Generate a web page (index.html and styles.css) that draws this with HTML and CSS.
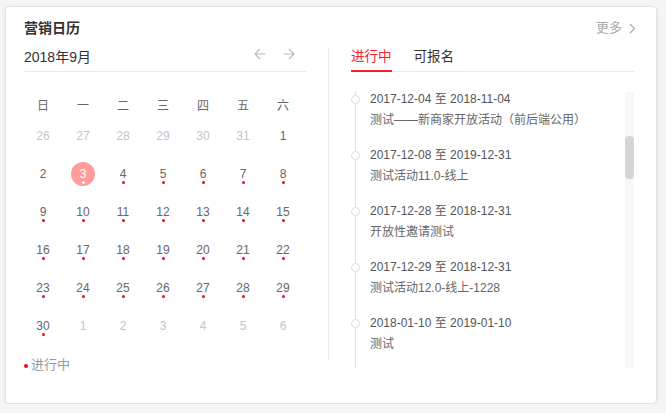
FILE: index.html
```html
<!DOCTYPE html>
<html lang="zh-CN">
<head>
<meta charset="utf-8">
<title>营销日历</title>
<link rel="stylesheet" href="styles.css">
</head>
<body>
<div class="card">
  <div class="card-head">
    <span class="card-title">营销日历</span>
    <span class="more">更多<svg class="chev" width="7" height="11" viewBox="0 0 7 11"><path d="M1 1l4.5 4.5L1 10" fill="none" stroke="#aaa" stroke-width="1.2"/></svg></span>
  </div>
  <div class="card-body">
    <div class="cal">
      <div class="cal-head">
        <span class="month">2018年9月</span>
        <div class="nav">
          <svg width="12" height="12" viewBox="0 0 12 12"><path d="M11.5 6H1M6 1L1 6l5 5" fill="none" stroke="#b6bbc4" stroke-width="1.2"/></svg>
          <svg width="12" height="12" viewBox="0 0 12 12"><path d="M0.5 6H11M6 1l5 5-5 5" fill="none" stroke="#b6bbc4" stroke-width="1.2"/></svg>
        </div>
      </div>
      <div class="grid">
        <div class="wd">日</div><div class="wd">一</div><div class="wd">二</div><div class="wd">三</div><div class="wd">四</div><div class="wd">五</div><div class="wd">六</div>
        <div class="day other"><span class="num">26</span></div>
        <div class="day other"><span class="num">27</span></div>
        <div class="day other"><span class="num">28</span></div>
        <div class="day other"><span class="num">29</span></div>
        <div class="day other"><span class="num">30</span></div>
        <div class="day other"><span class="num">31</span></div>
        <div class="day"><span class="num">1</span></div>
        <div class="day"><span class="num">2</span></div>
        <div class="day today has"><span class="num">3</span></div>
        <div class="day has"><span class="num">4</span></div>
        <div class="day has"><span class="num">5</span></div>
        <div class="day has"><span class="num">6</span></div>
        <div class="day has"><span class="num">7</span></div>
        <div class="day has"><span class="num">8</span></div>
        <div class="day has"><span class="num">9</span></div>
        <div class="day has"><span class="num">10</span></div>
        <div class="day has"><span class="num">11</span></div>
        <div class="day has"><span class="num">12</span></div>
        <div class="day has"><span class="num">13</span></div>
        <div class="day has"><span class="num">14</span></div>
        <div class="day has"><span class="num">15</span></div>
        <div class="day has"><span class="num">16</span></div>
        <div class="day has"><span class="num">17</span></div>
        <div class="day has"><span class="num">18</span></div>
        <div class="day has"><span class="num">19</span></div>
        <div class="day has"><span class="num">20</span></div>
        <div class="day has"><span class="num">21</span></div>
        <div class="day has"><span class="num">22</span></div>
        <div class="day has"><span class="num">23</span></div>
        <div class="day has"><span class="num">24</span></div>
        <div class="day has"><span class="num">25</span></div>
        <div class="day has"><span class="num">26</span></div>
        <div class="day has"><span class="num">27</span></div>
        <div class="day has"><span class="num">28</span></div>
        <div class="day has"><span class="num">29</span></div>
        <div class="day has"><span class="num">30</span></div>
        <div class="day other"><span class="num">1</span></div>
        <div class="day other"><span class="num">2</span></div>
        <div class="day other"><span class="num">3</span></div>
        <div class="day other"><span class="num">4</span></div>
        <div class="day other"><span class="num">5</span></div>
        <div class="day other"><span class="num">6</span></div>
      </div>
      <div class="legend"><i class="ldot"></i>进行中</div>
    </div>
    <div class="divider"></div>
    <div class="events">
      <div class="tabs">
        <span class="tab active">进行中</span>
        <span class="tab">可报名</span>
      </div>
      <div class="list-wrap">
        <div class="timeline">
          <div class="items">
            <div class="item"><i class="tdot"></i><div class="date">2017-12-04 至 2018-11-04</div><div class="name">测试——新商家开放活动（前后端公用）</div></div>
            <div class="item"><i class="tdot"></i><div class="date">2017-12-08 至 2019-12-31</div><div class="name">测试活动11.0-线上</div></div>
            <div class="item"><i class="tdot"></i><div class="date">2017-12-28 至 2018-12-31</div><div class="name">开放性邀请测试</div></div>
            <div class="item"><i class="tdot"></i><div class="date">2017-12-29 至 2018-12-31</div><div class="name">测试活动12.0-线上-1228</div></div>
            <div class="item"><i class="tdot"></i><div class="date">2018-01-10 至 2019-01-10</div><div class="name">测试</div></div>
          </div>
        </div>
        <div class="track"><div class="thumb"></div></div>
      </div>
    </div>
  </div>
</div>
</body>
</html>
```
FILE: styles.css
```css
* { box-sizing: border-box; }
html, body { margin: 0; }
body {
  background: #f5f5f5;
  padding: 6px 0 0 5px;
  font-family: "Liberation Sans", "Noto Sans CJK SC", sans-serif;
  color: #333;
}
.card {
  width: 652px;
  height: 398px;
  background: #fff;
  border: 1px solid #e2e2e2;
  border-radius: 4px;
  box-shadow: 0 1px 4px rgba(0,0,0,0.08);
  padding: 11px 22px 0 18px;
}
.card-head {
  display: flex;
  justify-content: space-between;
  align-items: center;
  height: 20px;
}
.card-title {
  font-size: 14px;
  font-weight: bold;
  color: #333;
  line-height: 20px;
}
.more {
  display: flex;
  align-items: center;
  gap: 7px;
  font-size: 13px;
  color: #aaa;
  line-height: 20px;
  margin-right: -2px;
}
.card-body {
  display: flex;
  align-items: flex-start;
}
.cal {
  width: 282px;
  flex: none;
}
.cal-head {
  display: flex;
  justify-content: space-between;
  align-items: flex-start;
  margin-top: 9px;
  padding-bottom: 4px;
  border-bottom: 1px solid #e8eaee;
}
.month {
  font-size: 14px;
  line-height: 20px;
  color: #333;
}
.nav {
  display: flex;
  gap: 17px;
  padding-top: 1px;
  padding-right: 11px;
}
.grid {
  display: grid;
  grid-template-columns: repeat(7, 40px);
  grid-auto-rows: 38px;
  grid-template-rows: 32px;
  margin-top: 16px;
  margin-left: -1px;
  font-size: 12px;
}
.wd {
  display: flex;
  align-items: center;
  justify-content: center;
  color: #666;
}
.day {
  display: flex;
  justify-content: center;
  padding-top: 4px;
  color: #666;
}
.day.other { color: #c0c5cd; }
.num {
  position: relative;
  width: 24px;
  height: 24px;
  padding-top: 1px;
  line-height: 23px;
  text-align: center;
  border-radius: 50%;
}
.day.has .num::after {
  content: "";
  position: absolute;
  left: 50%;
  top: 19px;
  width: 3px;
  height: 3px;
  margin-left: -1.5px;
  border-radius: 50%;
  background: #e6101c;
}
.day.today .num {
  background: #ff9c9c;
  color: #fff;
}
.day.today .num::after { background: #fff; }
.legend {
  display: flex;
  align-items: center;
  margin-top: 7px;
  font-size: 13px;
  line-height: 20px;
  color: #999;
}
.ldot {
  width: 4px;
  height: 4px;
  border-radius: 50%;
  background: #e6101c;
  margin: 1px 3px 0 0;
}
.divider {
  flex: none;
  width: 1px;
  height: 313px;
  margin: 9px 22px 0;
  background: #e8eaee;
}
.events {
  flex: 1;
  min-width: 0;
}
.tabs {
  display: flex;
  gap: 22px;
  margin-top: 9px;
  border-bottom: 1px solid #e8eaee;
}
.tab {
  font-size: 13.5px;
  line-height: 20px;
  padding-bottom: 3px;
  border-bottom: 2px solid transparent;
  margin-bottom: -1px;
  color: #333;
}
.tab.active {
  color: #f5222d;
  border-bottom-color: #f5222d;
}
.list-wrap {
  display: flex;
  margin-top: 20px;
  height: 276px;
}
.timeline {
  flex: 1;
  overflow: hidden;
}
.items {
  margin-left: 4px;
  border-left: 1px solid #e1e4ea;
}
.item {
  position: relative;
  height: 56px;
  padding-left: 14px;
  font-size: 12px;
}
.tdot {
  position: absolute;
  left: -5px;
  top: 3px;
  width: 9px;
  height: 9px;
  border-radius: 50%;
  background: #fff;
  border: 1px solid #dcdfe6;
}
.date {
  line-height: 14px;
  color: #555;
}
.name {
  margin-top: 7px;
  line-height: 14px;
  color: #666;
}
.track {
  flex: none;
  width: 9px;
  background: #f7f7f7;
}
.thumb {
  margin-top: 44px;
  height: 43px;
  border-radius: 4px;
  background: #d6d6d6;
}
```
